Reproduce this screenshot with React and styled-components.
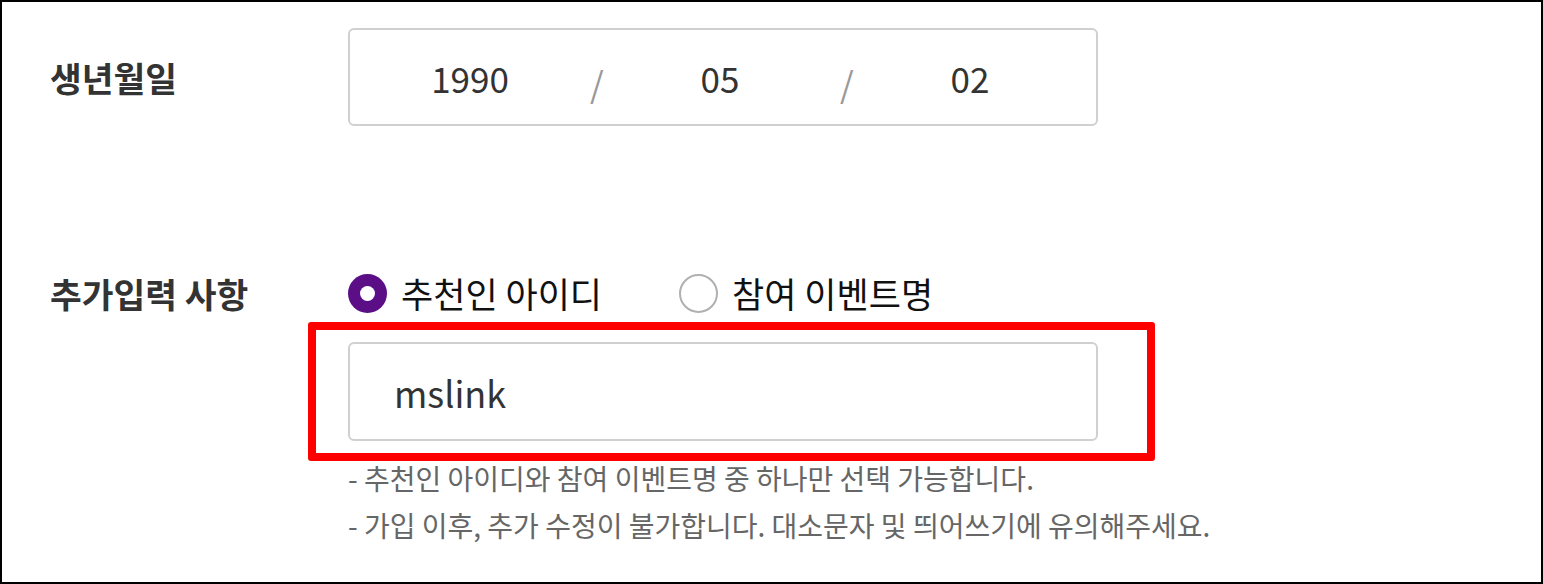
import React, { useState } from 'react';
import styled, { createGlobalStyle } from 'styled-components';

const GlobalStyle = createGlobalStyle`
  html, body {
    margin: 0;
    padding: 0;
    background: #fff;
  }
  body {
    font-family: "Noto Sans CJK KR", "Noto Sans", sans-serif;
    color: #333;
  }
`;

const Page = styled.div`
  box-sizing: border-box;
  width: 1543px;
  height: 584px;
  border: 2px solid #000;
  padding: 26px 0 0 46px;
  overflow: hidden;
`;

const Row = styled.div`
  display: grid;
  grid-template-columns: 300px 750px;
  align-items: ${p => (p.top ? 'start' : 'center')};
  margin-top: ${p => p.gap || 0}px;
`;

const Label = styled.div`
  font-size: 34.5px;
  font-weight: 700;
  color: #333;
  line-height: 40px;
  padding-left: 2px;
`;

const DateBox = styled.div`
  box-sizing: border-box;
  height: 98px;
  border: 2px solid #d0d0d0;
  border-radius: 6px;
  display: grid;
  grid-template-columns: 240px 10px 240px 10px 240px;
  align-items: center;
`;

const DatePart = styled.span`
  text-align: center;
  font-size: 35px;
  color: #333;
  line-height: 1;
`;

const Slash = styled.span`
  text-align: center;
  font-size: 35px;
  color: #999;
  line-height: 1;
  padding-top: 10px;
`;

const Field = styled.div`
  display: flex;
  flex-direction: column;
`;

const RadioGroup = styled.div`
  display: flex;
  align-items: center;
  gap: 77px;
  height: 40px;
`;

const RadioOption = styled.label`
  display: flex;
  align-items: center;
  gap: 14px;
  font-size: 35px;
  color: #111;
  cursor: pointer;
  line-height: 40px;
  white-space: nowrap;
`;

const RadioMark = styled.span`
  box-sizing: border-box;
  flex: none;
  width: 39px;
  height: 39px;
  border-radius: 50%;
  display: flex;
  align-items: center;
  justify-content: center;
  background: ${p => (p.checked ? '#5b0e86' : '#fff')};
  border: ${p => (p.checked ? 'none' : '2px solid #b0b0b0')};
  &::after {
    content: '';
    display: ${p => (p.checked ? 'block' : 'none')};
    width: 15px;
    height: 15px;
    border-radius: 50%;
    background: #fff;
  }
`;

const InputWrap = styled.div`
  position: relative;
  margin-top: 29px;
`;

const TextInput = styled.div`
  box-sizing: border-box;
  height: 99px;
  border: 2px solid #d0d0d0;
  border-radius: 6px;
  padding-left: 44px;
  display: flex;
  align-items: center;
  font-size: 36px;
  color: #333;
`;

/* red annotation box drawn over the input */
const Highlight = styled.div`
  position: absolute;
  top: -20px;
  left: -40px;
  right: -57px;
  bottom: -20px;
  border: 8px solid #ff0000;
  border-radius: 3px;
  pointer-events: none;
`;

const Help = styled.p`
  margin: ${p => (p.first ? '14px' : '0')} 0 0;
  font-size: 28px;
  line-height: 47px;
  color: #666;
  white-space: nowrap;
`;

export default function App() {
  const [choice, setChoice] = useState('id');
  const options = [
    { key: 'id', text: '추천인 아이디' },
    { key: 'event', text: '참여 이벤트명' },
  ];

  return (
    <>
      <GlobalStyle />
      <Page>
        <Row>
          <Label>생년월일</Label>
          <DateBox>
            <DatePart>1990</DatePart>
            <Slash>/</Slash>
            <DatePart>05</DatePart>
            <Slash>/</Slash>
            <DatePart>02</DatePart>
          </DateBox>
        </Row>
        <Row top gap={147}>
          <Label>추가입력 사항</Label>
          <Field>
            <RadioGroup>
              {options.map(o => (
                <RadioOption key={o.key} onClick={() => setChoice(o.key)}>
                  <RadioMark checked={choice === o.key} />
                  {o.text}
                </RadioOption>
              ))}
            </RadioGroup>
            <InputWrap>
              <TextInput>mslink</TextInput>
              <Highlight />
            </InputWrap>
            <Help first>- 추천인 아이디와 참여 이벤트명 중 하나만 선택 가능합니다.</Help>
            <Help>- 가입 이후, 추가 수정이 불가합니다. 대소문자 및 띄어쓰기에 유의해주세요.</Help>
          </Field>
        </Row>
      </Page>
    </>
  );
}
